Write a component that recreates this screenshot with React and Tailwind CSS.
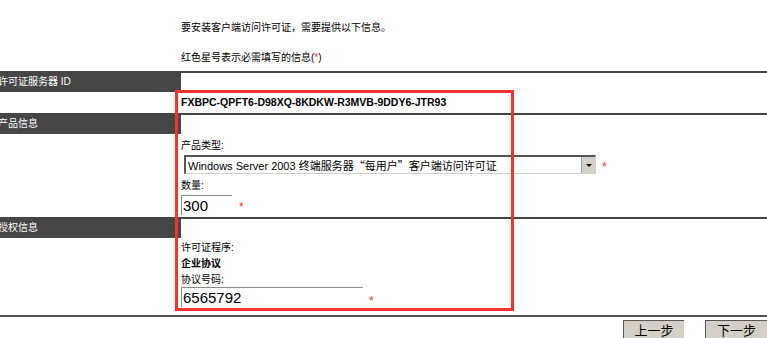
import React from "react";

const font = { fontFamily: '"Liberation Sans", "Noto Sans CJK SC", sans-serif' };
const cjk = { fontFamily: '"Noto Sans CJK SC", sans-serif' };

function Star({ className = "" }) {
  return <span className={"text-[#ff3333] text-[12px] leading-none " + className}>*</span>;
}

function HeaderRow({ label }) {
  return (
    <div className="flex h-[21px]">
      <div className="w-[181px] shrink-0 bg-[#464646] text-white text-[10px] leading-[21px] overflow-hidden whitespace-nowrap">
        <span className="-ml-[2px] inline-block">{label}</span>
      </div>
      <div className="flex-1 border-t-2 border-[#464646]"></div>
    </div>
  );
}

export default function App() {
  return (
    <div className="relative w-[767px] h-[338px] bg-white text-black overflow-hidden" style={font}>
      {/* intro */}
      <div className="h-[71px] pl-[181px] pt-[21px] text-[10px] leading-[14px]">
        <div>要安装客户端访问许可证，需要提供以下信息。</div>
        <div className="mt-[16px]">
          红色星号表示必需填写的信息(<span className="text-[#ff3333]">*</span>)
        </div>
      </div>

      {/* row 1 */}
      <HeaderRow label="许可证服务器 ID" />
      <div className="h-[21px] pl-[181px] flex items-center">
        <span className="text-[10.5px] font-bold">FXBPC-QPFT6-D98XQ-8KDKW-R3MVB-9DDY6-JTR93</span>
      </div>

      {/* row 2 */}
      <HeaderRow label="产品信息" />
      <div className="h-[83px] pl-[181px] pt-[3px] flex flex-col">
        <div className="text-[10px] leading-[14px] mt-[2px]">产品类型:</div>
        <div className="flex items-center mt-[2px]">
          <div className="ml-[3px] w-[412px] h-[19px] flex border-t-2 border-l-2 border-[#555] border-r border-b border-r-[#d4d0c8] border-b-[#d4d0c8] bg-white">
            <div className="flex-1 text-[11px] leading-[16px] pl-[2px] whitespace-nowrap overflow-hidden">
              Windows Server 2003 终端服务器<span style={cjk}>“</span>每用户<span style={cjk}>”</span>客户端访问许可证
            </div>
            <div className="w-[14px] h-full bg-[#d4d0c8] border-l border-[#a0a0a0] flex flex-col items-center justify-center">
              <div className="w-0 h-0 border-l-[3px] border-r-[3px] border-t-[3px] border-l-transparent border-r-transparent border-t-black"></div>
            </div>
          </div>
          <Star className="ml-[6px] mt-[4px]" />
        </div>
        <div className="text-[10px] leading-[14px] mt-[5px]">数量:</div>
        <div className="flex items-center mt-[2px]">
          <div className="w-[51px] h-[20px] border-t border-l border-[#8a8a8a] text-[15px] leading-[19px] pl-[1px]">300</div>
          <Star className="ml-[7px] mt-[4px]" />
        </div>
      </div>

      {/* row 3 */}
      <HeaderRow label="授权信息" />
      <div className="h-[77px] pl-[181px] pt-[3px] flex flex-col">
        <div className="text-[10px] leading-[14px]">许可证程序:</div>
        <div className="text-[10px] leading-[14px] mt-[2px] font-bold">企业协议</div>
        <div className="text-[10px] leading-[14px] mt-[2px]">协议号码:</div>
        <div className="flex items-center">
          <div className="w-[182px] h-[20px] border-t border-l border-[#8a8a8a] text-[15px] leading-[19px] pl-[1px]">6565792</div>
          <Star className="ml-[6px] mt-[8px]" />
        </div>
      </div>

      {/* bottom line */}
      <div className="h-[2px] bg-[#555]"></div>

      {/* buttons */}
      <div className="flex justify-end gap-[21px] pt-[3px]">
        <button className="w-[61px] h-[20px] bg-[#d4d0c8] border-t border-l border-[#555] text-[13px] leading-[18px]">上一步</button>
        <button className="w-[62px] h-[20px] bg-[#d4d0c8] border-t border-l border-[#555] text-[13px] leading-[18px]">下一步</button>
      </div>

      {/* red annotation box */}
      <div className="absolute left-[175px] top-[90px] w-[339px] h-[221px] border-[3px] border-[#f33333] pointer-events-none"></div>
    </div>
  );
}
